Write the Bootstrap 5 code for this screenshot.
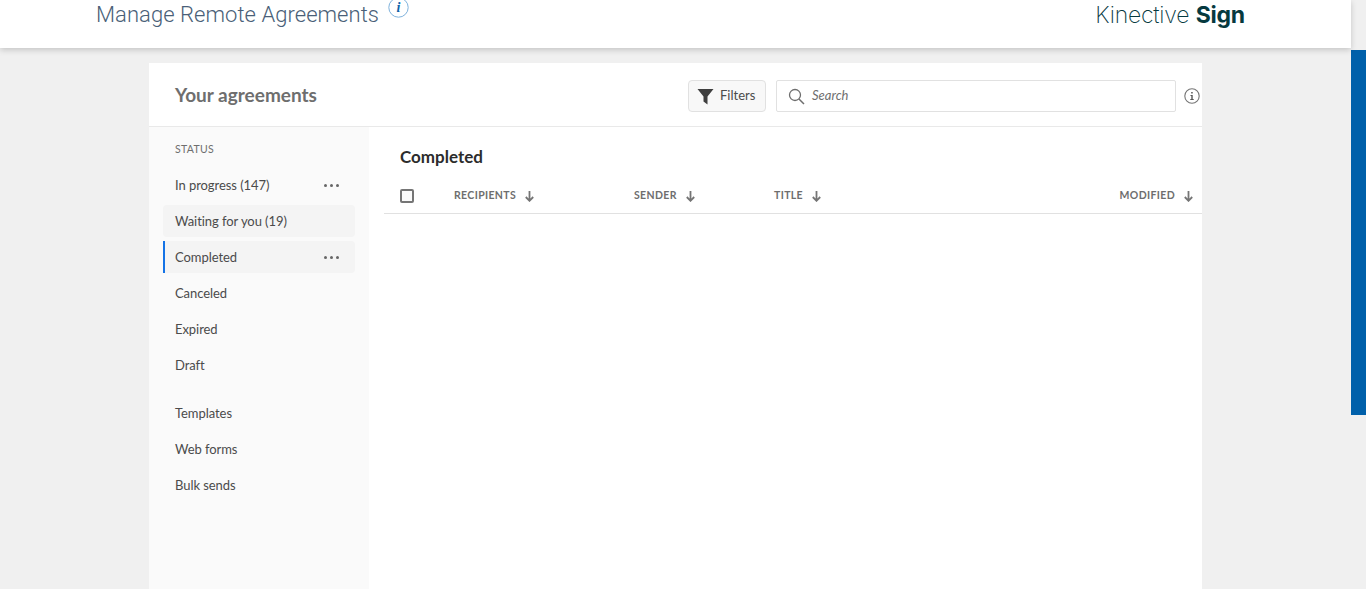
<!doctype html>
<html lang="en">
<head>
<meta charset="utf-8">
<title>Manage Remote Agreements</title>
<link href="https://cdn.jsdelivr.net/npm/bootstrap@5.3.0/dist/css/bootstrap.min.css" rel="stylesheet">
<style>
html,body{height:589px;overflow:hidden}
body{background:#f0f0f0;font-family:"Lato","Open Sans",sans-serif;color:#4b4b4b}
.page-wrap{height:589px}
.page-col{min-width:0}
.top-bar{height:48px;background:#fff;box-shadow:0 2px 6px rgba(0,0,0,.18);padding-left:96px;padding-right:106px;position:relative;z-index:2}
.page-title{font-family:Roboto,sans-serif;font-weight:300;font-size:22px;line-height:29px;color:#4a5f78;letter-spacing:.05px;margin:0}
.info-top{margin:-3px 0 0 9px;display:block}
.brand-name{font-family:Inter,sans-serif;font-weight:200;font-size:23px;line-height:30px;color:#06393f;letter-spacing:-.2px}
.brand-name b{font-weight:700}
.scroll-col{width:15px;background:#f0f0f0}
.scroll-thumb{width:15px;height:365px;margin-top:50px;background:#0060aa}
.sheet{width:1053px;margin:15px 0 0 149px;background:#fff;height:526px}
.sheet-head{height:64px;border-bottom:1px solid #e9e9e9;padding:17px 0 0 26px}
.sheet-title{font-size:19px;font-weight:700;color:#6e6e6e;line-height:31px;margin:-1px 0 0;width:513px}
.filter-btn{width:78px;height:32px;border:1px solid #e1e1e1;border-radius:4px;background:#f8f8f8;font-size:13px;color:#4b4b4b;padding:0 0 0 8px;gap:6px}
.search-box{width:400px;height:32px;border:1px solid #e1e1e1;border-radius:2px;margin-left:10px;padding-left:11px;gap:7px;font-size:13px;font-style:italic;color:#6e6e6e}
.info-side{margin-left:8px}
.side-col{width:220px;background:#fafafa;padding:0 14px}
.side-label{font-size:10.5px;letter-spacing:.3px;color:#6e6e6e;padding:15px 0 0 12px;line-height:14px;margin-bottom:13px}
.side-item{height:32px;margin-bottom:4px;padding:0 16px 0 12px;font-size:13px;color:#4b4b4b;border-radius:4px;letter-spacing:-.06px}
.side-text{padding-top:2px}
.side-item.is-hover{background:#f4f4f4}
.side-item.is-current{background:#f4f4f4;border-left:2px solid #1473e6;border-radius:0 4px 4px 0;padding-left:10px}
.side-gap{height:12px}
.dots i{display:block;width:3px;height:3px;border-radius:50%;background:#666}
.dots i+i{margin-left:3px}
.main-col{min-width:0;padding-left:15px}
.main-title{font-size:17px;font-weight:700;color:#2c2c2c;padding:17px 0 0 16px;line-height:25px;margin:0}
.head-row{height:45px;border-bottom:1px solid #e1e1e1;font-size:10.5px;font-weight:700;letter-spacing:.36px;color:#6e6e6e;padding:10px 9px 0 16px}
.chk{width:14px;height:14px;border:2px solid #757575;border-radius:2px;background:#fafafa;margin:0 40px 0 0}
.col-a{width:180px}
.col-b{width:140px}
.col-c{flex:1 1 auto}
.arrow{margin-left:9px;margin-top:1px}
</style>
</head>
<body>
<div class="page-wrap d-flex">
  <div class="page-col flex-grow-1">
    <header class="top-bar d-flex justify-content-between align-items-start">
      <div class="d-flex align-items-start">
        <h1 class="page-title">Manage Remote Agreements</h1>
        <svg class="info-top" width="21" height="21" viewBox="0 0 21 21" aria-hidden="true"><circle cx="10.5" cy="10.5" r="9.7" fill="#fff" stroke="#7fb2dc" stroke-width="1"/><text x="10.5" y="15" text-anchor="middle" font-family="Liberation Serif,serif" font-style="italic" font-weight="700" font-size="14" fill="#0f62a8">i</text></svg>
      </div>
      <div class="brand-name">Kinective <b>Sign</b></div>
    </header>
    <section class="sheet d-flex flex-column">
      <div class="sheet-head d-flex align-items-start">
        <h2 class="sheet-title">Your agreements</h2>
        <button type="button" class="filter-btn btn d-flex align-items-center">
          <svg width="17" height="17" viewBox="0 0 17 17" aria-hidden="true"><path d="M.5 1h16L10.500 8.500V16.500L6.500 13.500V8.500z" fill="#3f3f3f"/></svg>
          <span>Filters</span>
        </button>
        <div class="search-box d-flex align-items-center">
          <svg width="17" height="17" viewBox="0 0 17 17" aria-hidden="true"><circle cx="7" cy="7" r="5.500" fill="none" stroke="#6e6e6e" stroke-width="1.300"/><path d="M11 11l5 5" stroke="#6e6e6e" stroke-width="1.500"/></svg>
          <span>Search</span>
        </div>
        <svg class="info-side align-self-start mt-2" width="16" height="16" viewBox="0 0 16 16" aria-hidden="true"><circle cx="8" cy="8" r="7.200" fill="none" stroke="#757575" stroke-width="1.100"/><path d="M6.500 7h2.200v4h1v1H6.300v-1h1V8h-.8zM7.200 4h1.500v1.600H7.200z" fill="#555"/></svg>
      </div>
      <div class="d-flex flex-grow-1">
        <nav class="side-col">
          <div class="side-label">STATUS</div>
          <div class="side-item d-flex align-items-center justify-content-between"><span class="side-text">In progress (147)</span><span class="dots d-flex"><i></i><i></i><i></i></span></div>
          <div class="side-item is-hover d-flex align-items-center"><span class="side-text">Waiting for you (19)</span></div>
          <div class="side-item is-current d-flex align-items-center justify-content-between"><span class="side-text">Completed</span><span class="dots d-flex"><i></i><i></i><i></i></span></div>
          <div class="side-item d-flex align-items-center"><span class="side-text">Canceled</span></div>
          <div class="side-item d-flex align-items-center"><span class="side-text">Expired</span></div>
          <div class="side-item d-flex align-items-center"><span class="side-text">Draft</span></div>
          <div class="side-gap"></div>
          <div class="side-item d-flex align-items-center"><span class="side-text">Templates</span></div>
          <div class="side-item d-flex align-items-center"><span class="side-text">Web forms</span></div>
          <div class="side-item d-flex align-items-center"><span class="side-text">Bulk sends</span></div>
        </nav>
        <main class="main-col flex-grow-1">
          <h3 class="main-title">Completed</h3>
          <div class="head-row d-flex align-items-center">
            <span class="chk"></span>
            <span class="col-a d-flex align-items-center">RECIPIENTS<svg class="arrow" width="9" height="11" viewBox="0 0 9 11" aria-hidden="true"><path d="M4.500 0v9.500M.8 6l3.700 3.800L8.200 6" fill="none" stroke="#757575" stroke-width="1.800"/></svg></span>
            <span class="col-b d-flex align-items-center">SENDER<svg class="arrow" width="9" height="11" viewBox="0 0 9 11" aria-hidden="true"><path d="M4.500 0v9.500M.8 6l3.700 3.800L8.200 6" fill="none" stroke="#757575" stroke-width="1.800"/></svg></span>
            <span class="col-c d-flex align-items-center">TITLE<svg class="arrow" width="9" height="11" viewBox="0 0 9 11" aria-hidden="true"><path d="M4.500 0v9.500M.8 6l3.700 3.800L8.200 6" fill="none" stroke="#757575" stroke-width="1.800"/></svg></span>
            <span class="d-flex align-items-center">MODIFIED<svg class="arrow" width="9" height="11" viewBox="0 0 9 11" aria-hidden="true"><path d="M4.500 0v9.500M.8 6l3.700 3.800L8.200 6" fill="none" stroke="#757575" stroke-width="1.800"/></svg></span>
          </div>
        </main>
      </div>
    </section>
  </div>
  <div class="scroll-col flex-shrink-0"><div class="scroll-thumb"></div></div>
</div>
</body>
</html>
